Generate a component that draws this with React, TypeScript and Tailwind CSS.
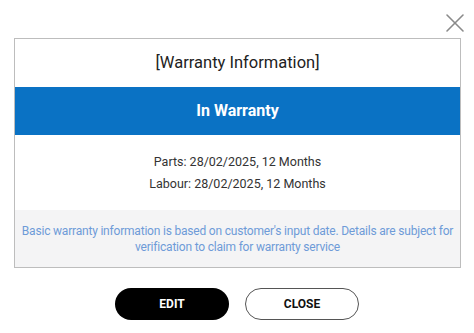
import { X } from "lucide-react";

export default function App() {
  return (
    <div
      className="relative w-[474px] h-[333px] bg-white overflow-hidden"
      style={{ fontFamily: "Roboto, 'Noto Sans', sans-serif" }}
    >
      <button className="absolute right-[3px] top-[7px] text-[#8a8a8a]">
        <X size={32} strokeWidth={1.2} />
      </button>

      <div className="pt-[38px] pl-[14px]">
        <div className="w-[447px] border border-[#bdbdbd] flex flex-col">
          <div className="h-[48px] flex items-center justify-center text-[16.5px] text-[#222]">
            [Warranty Information]
          </div>
          <div className="h-[48px] bg-[#0a72c4] flex items-center justify-center text-white font-bold text-[16px]">
            In Warranty
          </div>
          <div className="h-[75px] flex flex-col items-center justify-center text-[12.5px] leading-[22px] text-[#333]">
            <div>Parts: 28/02/2025, 12 Months</div>
            <div>Labour: 28/02/2025, 12 Months</div>
          </div>
          <div className="h-[57px] bg-[#f4f4f5] flex items-center justify-center px-[4px] text-center text-[12px] leading-[16px] tracking-[-0.2px] text-[#6e9bd8]">
            Basic warranty information is based on customer's input date. Details are subject for verification to claim for warranty service
          </div>
        </div>
      </div>

      <div className="mt-[20px] flex justify-center gap-[16px]">
        <button className="w-[114px] h-[32px] rounded-full bg-black text-white text-[12px] font-bold">
          EDIT
        </button>
        <button className="w-[114px] h-[32px] rounded-full border border-[#555] bg-white text-[#111] text-[12px] font-bold">
          CLOSE
        </button>
      </div>
    </div>
  );
}
